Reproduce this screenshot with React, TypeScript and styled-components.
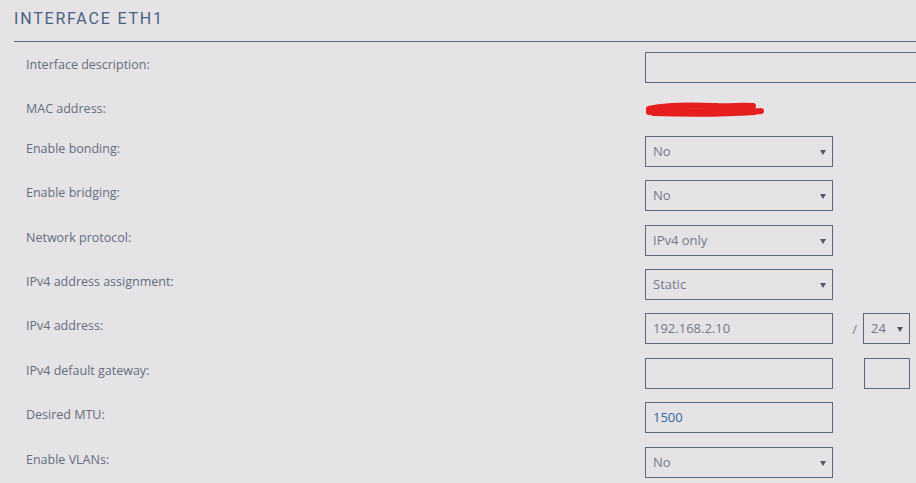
import React from 'react';
import styled, { createGlobalStyle } from 'styled-components';

const GlobalStyle = createGlobalStyle`
  html, body {
    margin: 0;
    padding: 0;
    background: #e5e3e6;
    overflow: hidden;
  }
  body {
    font-family: "Open Sans", "Noto Sans", sans-serif;
  }
`;

const Page = styled.div`
  width: 916px;
  height: 483px;
  overflow: hidden;
  padding-left: 14px;
  box-sizing: border-box;
`;

const Title = styled.h2`
  margin: 0 -20px 0 0;
  padding: 9px 0 0;
  height: 42px;
  box-sizing: border-box;
  border-bottom: 1px solid #5b687d;
  font-family: Roboto, "Liberation Sans", sans-serif;
  font-weight: 400;
  font-size: 16px;
  line-height: 20px;
  letter-spacing: 1.8px;
  color: #4b6183;
  text-transform: uppercase;
`;

const Form = styled.div`
  padding: 10px 0 0 12px;
  display: flex;
  flex-direction: column;
  gap: 13.4px;
`;

const Row = styled.div<{ $short?: boolean }>`
  display: flex;
  align-items: flex-start;
  min-height: ${(p) => (p.$short ? '26px' : '31px')};
`;

const Label = styled.div`
  width: 619px;
  flex: none;
  padding-top: 4px;
  font-size: 12.5px;
  line-height: 18px;
  color: #636e80;
`;

const Controls = styled.div`
  display: flex;
  align-items: center;
`;

const TextInput = styled.div<{ $width?: number; $blue?: boolean }>`
  width: ${(p) => p.$width ?? 188}px;
  height: 31px;
  box-sizing: border-box;
  border: 1px solid #5b687d;
  padding: 0 7px;
  font-size: 13px;
  line-height: 29px;
  color: ${(p) => (p.$blue ? '#2f67a3' : '#727988')};
  flex: none;
`;

const Select = styled.div<{ $width?: number }>`
  position: relative;
  width: ${(p) => p.$width ?? 188}px;
  height: 31px;
  box-sizing: border-box;
  border: 1px solid #5b687d;
  padding: 0 7px;
  font-size: 13px;
  line-height: 29px;
  color: #727988;
  flex: none;

  &::after {
    content: '';
    position: absolute;
    right: 6px;
    top: 13px;
    border-left: 3px solid transparent;
    border-right: 3px solid transparent;
    border-top: 5px solid #4e596b;
  }
`;

const Slash = styled.span`
  width: 30px;
  text-align: right;
  padding-right: 6px;
  box-sizing: border-box;
  font-size: 13px;
  color: #7a8290;
`;

const Spacer = styled.span`
  width: 31px;
`;

const Scribble = () => (
  <svg width="124" height="22" viewBox="0 0 124 22" style={{ display: 'block', marginTop: 3 }}>
    <g fill="none" stroke="#e61e1f" strokeLinecap="round" strokeLinejoin="round">
      <path d="M4 10 C 20 6, 45 6, 70 7 C 85 8, 95 6, 108 7" strokeWidth="6" />
      <path d="M4 13 C 30 11, 60 13, 90 12 C 100 11, 110 13, 116 12" strokeWidth="6" />
      <path d="M8 15 C 40 16, 80 16, 110 14" strokeWidth="4" />
    </g>
  </svg>
);

function App() {
  return (
    <Page>
      <GlobalStyle />
      <Title>Interface eth1</Title>
      <Form>
        <Row>
          <Label>Interface description:</Label>
          <TextInput $width={320} />
        </Row>
        <Row $short>
          <Label>MAC address:</Label>
          <Scribble />
        </Row>
        <Row>
          <Label>Enable bonding:</Label>
          <Select>No</Select>
        </Row>
        <Row>
          <Label>Enable bridging:</Label>
          <Select>No</Select>
        </Row>
        <Row>
          <Label>Network protocol:</Label>
          <Select>IPv4 only</Select>
        </Row>
        <Row>
          <Label>IPv4 address assignment:</Label>
          <Select>Static</Select>
        </Row>
        <Row>
          <Label>IPv4 address:</Label>
          <Controls>
            <TextInput>192.168.2.10</TextInput>
            <Slash>/</Slash>
            <Select $width={47}>24</Select>
          </Controls>
        </Row>
        <Row>
          <Label>IPv4 default gateway:</Label>
          <Controls>
            <TextInput />
            <Spacer />
            <TextInput $width={46} />
          </Controls>
        </Row>
        <Row>
          <Label>Desired MTU:</Label>
          <TextInput $blue>1500</TextInput>
        </Row>
        <Row>
          <Label>Enable VLANs:</Label>
          <Select>No</Select>
        </Row>
      </Form>
    </Page>
  );
}

export default App;
